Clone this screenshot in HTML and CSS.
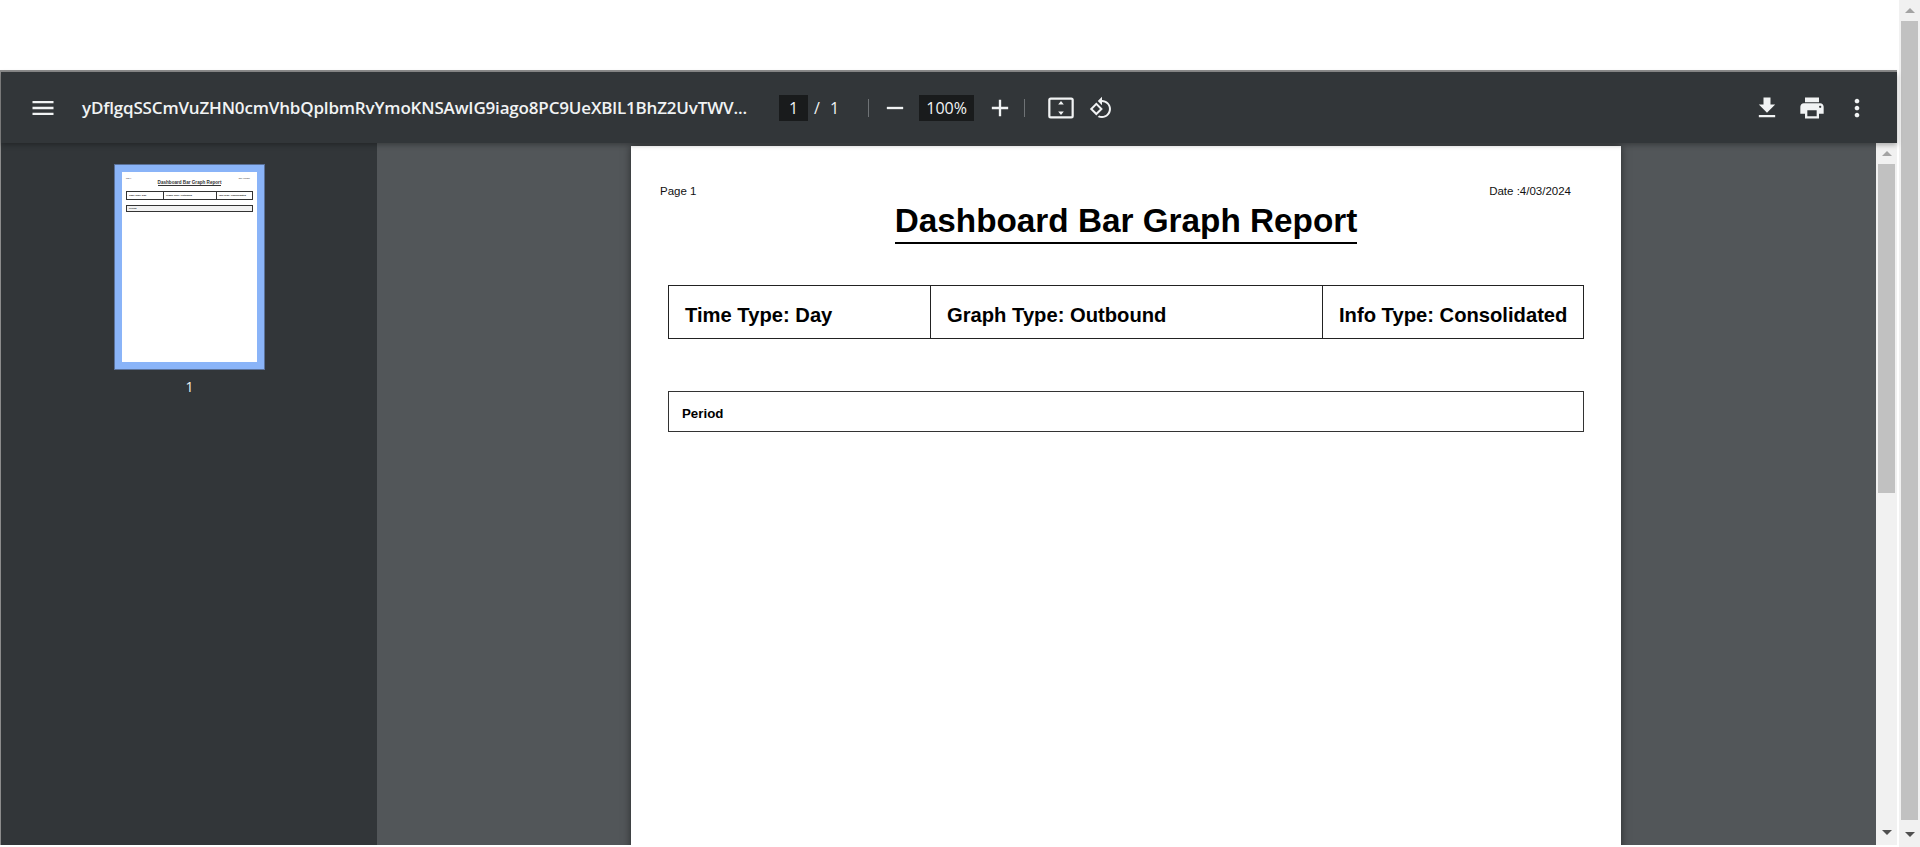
FILE: index.html
```html
<!DOCTYPE html>
<html lang="en">

<head>
    <meta charset="UTF-8">
    <meta name="viewport" content="width=device-width, initial-scale=1.0">
    <title>Dashboard Bar Graph Report</title>
    <link rel="stylesheet" href="styles.css">
</head>

<body>
    <div class="top-space"></div>

    <div class="shell">
        <div class="frame">
            <header class="toolbar">
                <svg class="icon icon-menu" viewBox="0 0 24 24"><path d="M3 18h18v-2H3v2zm0-5h18v-2H3v2zm0-7v2h18V6H3z"/></svg>
                <span class="doc-title">yDflgqSSCmVuZHN0cmVhbQplbmRvYmoKNSAwIG9iago8PC9UeXBlL1BhZ2UvTWV...</span>

                <span class="num-box page-box">1</span>
                <span class="slash">/</span>
                <span class="page-total">1</span>
                <span class="sep sep-first"></span>
                <svg class="icon icon-minus" viewBox="0 0 24 24"><path d="M19 13H5v-2h14v2z"/></svg>
                <span class="num-box zoom-box">100%</span>
                <svg class="icon icon-plus" viewBox="0 0 24 24"><path d="M19 13h-6v6h-2v-6H5v-2h6V5h2v6h6v2z"/></svg>
                <span class="sep sep-second"></span>
                <svg class="icon icon-fit" viewBox="0 0 24 24">
                    <rect x="2" y="4" width="20" height="16" rx="1.2" fill="none" stroke="#f1f3f4" stroke-width="1.9"/>
                    <path d="M12 5.9l2.4 3.2h-4.8zM12 18.1l-2.4-3.2h4.8z"/>
                </svg>
                <svg class="icon-rotate" viewBox="0 0 24 24"><path d="M7.34 6.41L.86 12.9l6.49 6.48 6.49-6.48-6.5-6.49zM3.69 12.9l3.66-3.66L11 12.9l-3.66 3.66-3.65-3.66zm15.67-6.26C17.61 4.88 15.3 4 13 4V.76L8.76 5 13 9.24V6c1.79 0 3.58.68 4.95 2.05 2.73 2.73 2.73 7.17 0 9.9C16.58 19.32 14.79 20 13 20c-.97 0-1.94-.21-2.84-.61l-1.49 1.49C10.02 21.62 11.51 22 13 22c2.3 0 4.61-.88 6.36-2.64 3.52-3.51 3.52-9.21 0-12.72z"/></svg>

                <div class="toolbar-right">
                    <svg class="icon" viewBox="0 0 24 24"><path d="M19 9h-4V3H9v6H5l7 7 7-7zM5 18v2h14v-2H5z"/></svg>
                    <svg class="icon" viewBox="0 0 24 24"><path d="M19 8H5c-1.66 0-3 1.34-3 3v6h4v4h12v-4h4v-6c0-1.66-1.34-3-3-3zm-3 11H8v-5h8v5zm3-7c-.55 0-1-.45-1-1s.45-1 1-1 1 .45 1 1-.45 1-1 1zm-1-9H6v4h12V3z"/></svg>
                    <svg class="icon" viewBox="0 0 24 24"><path d="M12 8c1.1 0 2-.9 2-2s-.9-2-2-2-2 .9-2 2 .9 2 2 2zm0 2c-1.1 0-2 .9-2 2s.9 2 2 2 2-.9 2-2-.9-2-2-2zm0 6c-1.1 0-2 .9-2 2s.9 2 2 2 2-.9 2-2-.9-2-2-2z"/></svg>
                </div>
            </header>

            <div class="content">
                <aside class="sidebar">
                    <div class="thumb">
                        <div class="thumb-page">
                            <div class="thumb-head"><span>Page 1</span><span>Date :4/03/2024</span></div>
                            <div class="thumb-title"><span>Dashboard Bar Graph Report</span></div>
                            <div class="thumb-types">
                                <span class="thumb-cell c1">Time Type: Day</span>
                                <span class="thumb-cell c2">Graph Type: Outbound</span>
                                <span class="thumb-cell c3">Info Type: Consolidated</span>
                            </div>
                            <div class="thumb-period">Period</div>
                        </div>
                    </div>
                    <div class="thumb-num">1</div>
                </aside>

                <main class="viewer">
                    <section class="page">
                        <div class="page-head">
                            <span>Page 1</span>
                            <span>Date :4/03/2024</span>
                        </div>
                        <h1 class="report-title"><span>Dashboard Bar Graph Report</span></h1>

                        <table class="types">
                            <tr>
                                <td class="col-time">Time Type: Day</td>
                                <td class="col-graph">Graph Type: Outbound</td>
                                <td class="col-info">Info Type: Consolidated</td>
                            </tr>
                        </table>

                        <div class="period">Period</div>
                    </section>
                </main>

                <div class="scrollbar inner-bar">
                    <span class="arrow-up"></span>
                    <div class="bar-thumb"></div>
                    <span class="arrow-down"></span>
                </div>
            </div>
        </div>

        <div class="scrollbar outer-bar">
            <span class="arrow-up"></span>
            <div class="bar-thumb"></div>
            <span class="arrow-down"></span>
        </div>
    </div>
</body>

</html>
```

FILE: styles.css
```css
html,
body {
    margin: 0;
    height: 100%;
    overflow: hidden;
    background-color: white;
    font-family: "Liberation Sans", Arial, sans-serif;
}

.top-space {
    height: 70px;
}

.shell {
    display: flex;
    height: 775px;
}

.frame {
    width: 1896px;
    display: flex;
    flex-direction: column;
    border-top: 2px solid #8c8c8c;
    border-left: 1px solid #8c8c8c;
    background-color: #525659;
}

/* toolbar */
.toolbar {
    position: relative;
    z-index: 2;
    height: 71px;
    flex-shrink: 0;
    display: flex;
    align-items: center;
    background-color: #323639;
    color: #f1f3f4;
    font-family: "Open Sans", sans-serif;
    box-shadow: 0 2px 5px rgba(0, 0, 0, 0.3);
}

.icon {
    width: 28px;
    height: 28px;
    fill: #f1f3f4;
    flex-shrink: 0;
}

.icon-menu {
    margin-left: 28px;
}

.doc-title {
    width: 697px;
    margin-left: 25px;
    font-size: 17px;
    font-weight: 600;
    white-space: nowrap;
    letter-spacing: -0.17px;
}

.num-box {
    height: 26px;
    line-height: 26px;
    background-color: #191b1c;
    text-align: center;
    font-size: 16px;
}

.page-box {
    width: 29px;
}

.slash {
    margin-left: 6px;
    width: 12px;
    font-size: 16px;
}

.page-total {
    margin-left: 4px;
    font-size: 16px;
}

.sep {
    width: 1px;
    height: 18px;
    background-color: #6f7376;
}

.sep-first {
    margin-left: 29px;
}

.icon-minus {
    margin-left: 12px;
}

.zoom-box {
    width: 55px;
    margin-left: 10px;
}

.icon-plus {
    margin-left: 12px;
}

.sep-second {
    margin-left: 10px;
}

.icon-fit {
    margin-left: 22px;
}

.icon-rotate {
    width: 24px;
    height: 24px;
    margin-left: 14px;
    fill: #f1f3f4;
    flex-shrink: 0;
}

.toolbar-right {
    margin-left: auto;
    margin-right: 26px;
    display: flex;
    gap: 17px;
}

/* body of the viewer */
.content {
    flex: 1;
    display: flex;
    min-height: 0;
}

.sidebar {
    width: 376px;
    flex-shrink: 0;
    background-color: #323639;
    padding-top: 21px;
    box-sizing: border-box;
}

.thumb {
    width: 151px;
    height: 206px;
    margin-left: 113px;
    box-sizing: border-box;
    border: 1px solid #5a7199;
    background-color: #8ab4f8;
    padding: 7px;
}

.thumb-page {
    height: 100%;
    background-color: white;
    padding: 5px 4px 0;
    box-sizing: border-box;
    color: #222;
    font-size: 2.4px;
    font-weight: bold;
}

.thumb-head {
    display: flex;
    justify-content: space-between;
    padding: 0 3px 0 0;
    font-size: 1.6px;
    font-weight: normal;
    line-height: 3px;
}

.thumb-title {
    text-align: center;
    font-size: 4.6px;
    line-height: 6px;
    color: #333;
}

.thumb-title span {
    border-bottom: 1px solid #333;
}

.thumb-types {
    display: flex;
    height: 9px;
    margin-top: 5px;
    border: 1px solid #333;
    box-sizing: border-box;
    line-height: 7px;
}

.thumb-cell {
    padding-left: 2px;
    box-sizing: border-box;
    white-space: nowrap;
    overflow: hidden;
}

.c1 {
    width: 36px;
}

.c2 {
    width: 54px;
    border-left: 1px solid #333;
    border-right: 1px solid #333;
}

.c3 {
    flex: 1;
}

.thumb-period {
    height: 7px;
    margin-top: 5px;
    padding-left: 2px;
    border: 1px solid #333;
    box-sizing: border-box;
    line-height: 5px;
    background-color: #f2f2f2;
}

.thumb-num {
    margin-top: 7px;
    padding-left: 113px;
    width: 151px;
    text-align: center;
    color: #f1f3f4;
    font-family: "Open Sans", sans-serif;
    font-size: 14px;
}

.viewer {
    flex: 1;
    min-width: 0;
    overflow: hidden;
    padding-top: 3px;
    padding-left: 254px;
}

.page {
    width: 990px;
    height: 800px;
    box-sizing: border-box;
    padding: 38px 50px 0 29px;
    background-color: white;
    color: black;
    box-shadow: 0 0 8px rgba(0, 0, 0, 0.5);
}

.page-head {
    display: flex;
    justify-content: space-between;
    font-size: 11.5px;
    line-height: 14px;
    color: #111;
}

.report-title {
    margin: 4px -21px 0 0;
    text-align: center;
    font-size: 33.3px;
    font-weight: bold;
    line-height: 38px;
}

.report-title span {
    display: inline-block;
    border-bottom: 2px solid black;
    line-height: 34px;
    padding-bottom: 4px;
}

.types {
    border-collapse: collapse;
    width: 916px;
    height: 54px;
    margin: 41px 0 0 8px;
    font-size: 20.2px;
    font-weight: bold;
}

.types td {
    border: 1px solid #222;
    padding: 6px 0 0 16px;
    box-sizing: border-box;
}

.col-time {
    width: 262px;
}

.col-graph {
    width: 392px;
}

.period {
    width: 916px;
    height: 41px;
    box-sizing: border-box;
    margin: 52px 0 0 8px;
    padding: 14px 0 0 13px;
    border: 1px solid #333;
    font-size: 13.3px;
    font-weight: bold;
    line-height: 15px;
}

/* scrollbars */
.scrollbar {
    width: 21px;
    flex-shrink: 0;
    display: flex;
    flex-direction: column;
    align-items: center;
    background-color: #f1f1f1;
    box-sizing: border-box;
}

.inner-bar {
    position: relative;
    z-index: 1;
}

.outer-bar {
    height: 847px;
    margin-top: -70px;
    margin-left: 2px;
}

.bar-thumb {
    width: 17px;
    background-color: #c1c1c1;
}

.inner-bar .bar-thumb {
    height: 329px;
}

.outer-bar .bar-thumb {
    height: 799px;
}

.arrow-up,
.arrow-down {
    width: 0;
    height: 0;
    border-left: 5px solid transparent;
    border-right: 5px solid transparent;
}

.arrow-up {
    margin: 8px 0 8px;
    border-bottom: 5px solid #a3a3a3;
}

.arrow-down {
    margin-top: auto;
    margin-bottom: 10px;
    border-top: 5px solid #505050;
}
```
